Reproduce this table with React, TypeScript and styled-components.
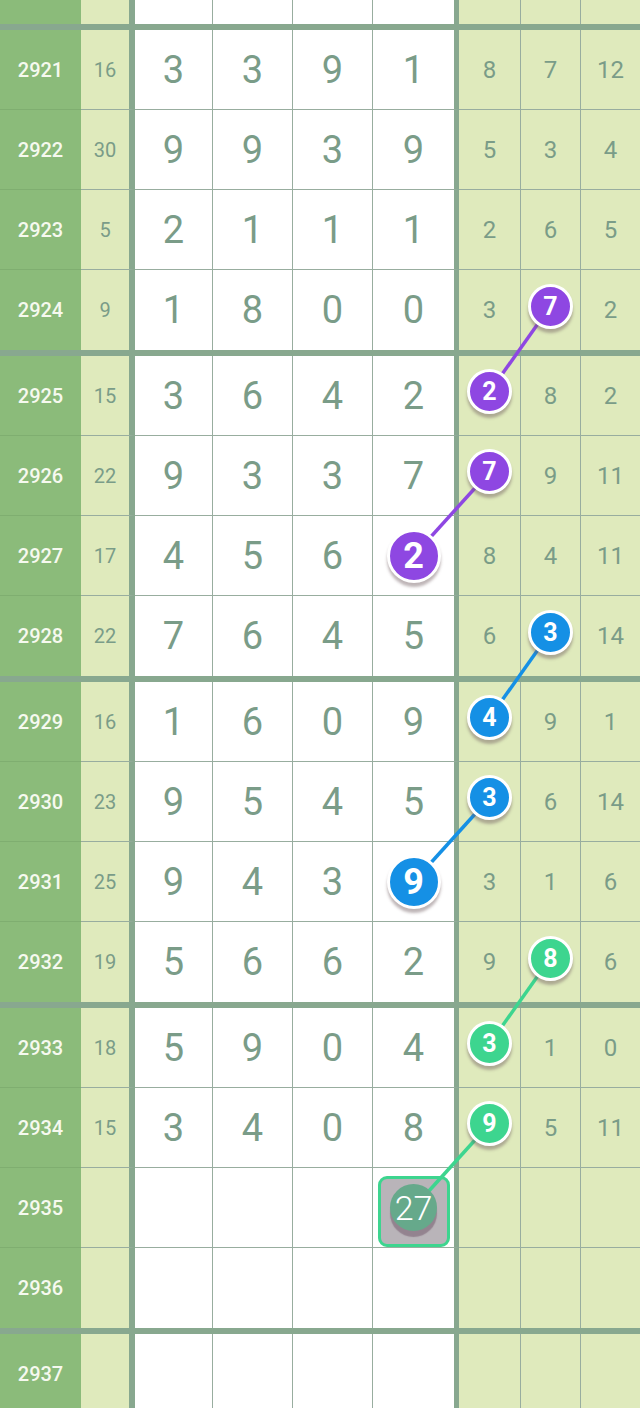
import React from 'react';
import styled, { createGlobalStyle } from 'styled-components';

const C = {
  period: '#8bbb7a',
  periodLine: '#7fae70',
  light: '#dfeabc',
  line: '#88a88f',
  thin: '#98ad9f',
  text: '#7a9c88',
  purple: '#8e47e2',
  blue: '#1590e5',
  green: '#3dd58f',
};

const GlobalStyle = createGlobalStyle`
  html, body { margin: 0; padding: 0; background: #ffffff; }
  body { font-family: Roboto, "Noto Sans", Arial, sans-serif; }
`;

const Page = styled.div`
  width: 640px;
  height: 1408px;
  overflow: hidden;
  position: relative;
  background: #ffffff;
`;

const Row = styled.div<{ $stub?: boolean }>`
  display: grid;
  grid-template-columns: 81px 54px 78px 80px 80px 86px 62px 60px 59px;
  height: 80px;
  margin-top: ${(p) => (p.$stub ? '-56px' : '0')};
`;

const Cell = styled.div<{ $thin: boolean }>`
  box-sizing: border-box;
  display: flex;
  align-items: center;
  justify-content: center;
  height: 80px;
  border-bottom: ${(p) => (p.$thin ? `1px solid ${C.thin}` : 'none')};
`;

const PeriodCell = styled(Cell)`
  background: ${C.period};
  color: #f6f9ef;
  font-size: 20px;
  font-weight: 500;
  border-bottom-color: ${C.periodLine};
`;

const SumCell = styled(Cell)`
  background: ${C.light};
  color: ${C.text};
  font-size: 20px;
  border-right: 6px solid ${C.line};
`;

const DigitCell = styled(Cell)<{ $last?: boolean }>`
  background: #ffffff;
  color: ${C.text};
  font-size: 38px;
  border-right: ${(p) => (p.$last ? `5px solid ${C.line}` : `1px solid ${C.thin}`)};
`;

const MissCell = styled(Cell)<{ $last?: boolean }>`
  background: ${C.light};
  color: ${C.text};
  font-size: 24px;
  border-right: ${(p) => (p.$last ? 'none' : `1px solid ${C.thin}`)};
`;

const Divider = styled.div`
  height: 6px;
  background: ${C.line};
`;

const Body = styled.div`
  position: relative;
`;

const Overlay = styled.svg`
  position: absolute;
  left: 0;
  top: 0;
  z-index: 1;
  pointer-events: none;
`;

const Ball = styled.div<{ $color: string; $big?: boolean }>`
  position: relative;
  z-index: 2;
  box-sizing: border-box;
  width: ${(p) => (p.$big ? 54 : 45)}px;
  height: ${(p) => (p.$big ? 54 : 45)}px;
  border-radius: 50%;
  border: 3px solid #ffffff;
  background: ${(p) => p.$color};
  color: #ffffff;
  font-size: ${(p) => (p.$big ? 36 : 25)}px;
  font-weight: 700;
  display: flex;
  align-items: center;
  justify-content: center;
  transform: translateY(${(p) => (p.$big ? 0 : -4)}px);
  box-shadow: 0 4px 3px rgba(110, 90, 95, 0.45);
`;

const PickBox = styled.div`
  position: relative;
  box-sizing: border-box;
  width: 72px;
  height: 71px;
  margin-top: 8px;
  border: 3px solid ${C.green};
  border-radius: 9px;
  background: #b9b4b9;
  display: flex;
  align-items: center;
  justify-content: center;
`;

const PickCircle = styled.div`
  position: relative;
  z-index: 2;
  width: 47px;
  height: 47px;
  border-radius: 50%;
  background: #66a98b;
  color: #ffffff;
  font-size: 34px;
  font-weight: 300;
  display: flex;
  align-items: center;
  justify-content: center;
  transform: translateY(-4px);
  box-shadow: 0 6px 1px rgba(135, 115, 130, 0.75);
`;

type Mark = { col: number; v: number; color: string };

type RowData = {
  p: number;
  sum?: number;
  d?: number[];
  m?: number[];
  mark?: Mark;
  pick?: number;
};

const rows: RowData[] = [
  { p: 2921, sum: 16, d: [3, 3, 9, 1], m: [8, 7, 12] },
  { p: 2922, sum: 30, d: [9, 9, 3, 9], m: [5, 3, 4] },
  { p: 2923, sum: 5, d: [2, 1, 1, 1], m: [2, 6, 5] },
  { p: 2924, sum: 9, d: [1, 8, 0, 0], m: [3, 7, 2], mark: { col: 5, v: 7, color: C.purple } },
  { p: 2925, sum: 15, d: [3, 6, 4, 2], m: [2, 8, 2], mark: { col: 4, v: 2, color: C.purple } },
  { p: 2926, sum: 22, d: [9, 3, 3, 7], m: [7, 9, 11], mark: { col: 4, v: 7, color: C.purple } },
  { p: 2927, sum: 17, d: [4, 5, 6, 2], m: [8, 4, 11], mark: { col: 3, v: 2, color: C.purple } },
  { p: 2928, sum: 22, d: [7, 6, 4, 5], m: [6, 3, 14], mark: { col: 5, v: 3, color: C.blue } },
  { p: 2929, sum: 16, d: [1, 6, 0, 9], m: [4, 9, 1], mark: { col: 4, v: 4, color: C.blue } },
  { p: 2930, sum: 23, d: [9, 5, 4, 5], m: [3, 6, 14], mark: { col: 4, v: 3, color: C.blue } },
  { p: 2931, sum: 25, d: [9, 4, 3, 9], m: [3, 1, 6], mark: { col: 3, v: 9, color: C.blue } },
  { p: 2932, sum: 19, d: [5, 6, 6, 2], m: [9, 8, 6], mark: { col: 5, v: 8, color: C.green } },
  { p: 2933, sum: 18, d: [5, 9, 0, 4], m: [3, 1, 0], mark: { col: 4, v: 3, color: C.green } },
  { p: 2934, sum: 15, d: [3, 4, 0, 8], m: [9, 5, 11], mark: { col: 4, v: 9, color: C.green } },
  { p: 2935, pick: 27 },
  { p: 2936 },
  { p: 2937 },
  { p: 2938 },
];

// column centers (x), index: 0..3 digits, 4..6 miss columns
const colX = [173.5, 253, 333, 413.5, 489.5, 550.5, 610];

const rowCenter = (i: number, big: boolean) =>
  Math.floor(i / 4) * 326 + (i % 4) * 80 + 40 + (big ? 0 : -4);

const links: { a: number; b: number; color: string }[] = [
  { a: 3, b: 4, color: C.purple },
  { a: 5, b: 6, color: C.purple },
  { a: 7, b: 8, color: C.blue },
  { a: 9, b: 10, color: C.blue },
  { a: 11, b: 12, color: C.green },
  { a: 13, b: 14, color: C.green },
];

const pointOf = (i: number) => {
  const r = rows[i];
  if (r.pick !== undefined) return { x: colX[3], y: rowCenter(i, true) };
  const mk = r.mark!;
  return { x: colX[mk.col], y: rowCenter(i, mk.col === 3) };
};

const renderRow = (r: RowData, thin: boolean, key: React.Key) => {
  const digitContent = (c: number) => {
    if (r.pick !== undefined && c === 3) {
      return (
        <PickBox>
          <PickCircle>{r.pick}</PickCircle>
        </PickBox>
      );
    }
    if (r.mark && r.mark.col === c) {
      return (
        <Ball $color={r.mark.color} $big>
          {r.mark.v}
        </Ball>
      );
    }
    return r.d ? r.d[c] : '';
  };
  const missContent = (c: number) => {
    if (r.mark && r.mark.col === c + 4) {
      return <Ball $color={r.mark.color}>{r.mark.v}</Ball>;
    }
    return r.m ? r.m[c] : '';
  };
  return (
    <Row key={key}>
      <PeriodCell $thin={thin}>{r.p}</PeriodCell>
      <SumCell $thin={thin}>{r.sum ?? ''}</SumCell>
      {[0, 1, 2, 3].map((c) => (
        <DigitCell key={c} $thin={thin} $last={c === 3}>
          {digitContent(c)}
        </DigitCell>
      ))}
      {[0, 1, 2].map((c) => (
        <MissCell key={c} $thin={thin} $last={c === 2}>
          {missContent(c)}
        </MissCell>
      ))}
    </Row>
  );
};

export default function App() {
  const groups: RowData[][] = [];
  for (let i = 0; i < rows.length; i += 4) groups.push(rows.slice(i, i + 4));

  return (
    <>
      <GlobalStyle />
      <Page>
        <Row $stub>
          <PeriodCell $thin={false} />
          <SumCell $thin={false} />
          {[0, 1, 2, 3].map((c) => (
            <DigitCell key={c} $thin={false} $last={c === 3} />
          ))}
          {[0, 1, 2].map((c) => (
            <MissCell key={c} $thin={false} $last={c === 2} />
          ))}
        </Row>
        <Divider />
        <Body>
          <Overlay width={640} height={1500}>
            {links.map((l, k) => {
              const a = pointOf(l.a);
              const b = pointOf(l.b);
              return (
                <line
                  key={k}
                  x1={a.x}
                  y1={a.y}
                  x2={b.x}
                  y2={b.y}
                  stroke={l.color}
                  strokeWidth={3.5}
                />
              );
            })}
          </Overlay>
          {groups.map((g, gi) => (
            <React.Fragment key={gi}>
              {g.map((r, ri) => renderRow(r, ri < 3, r.p))}
              <Divider />
            </React.Fragment>
          ))}
        </Body>
      </Page>
    </>
  );
}
